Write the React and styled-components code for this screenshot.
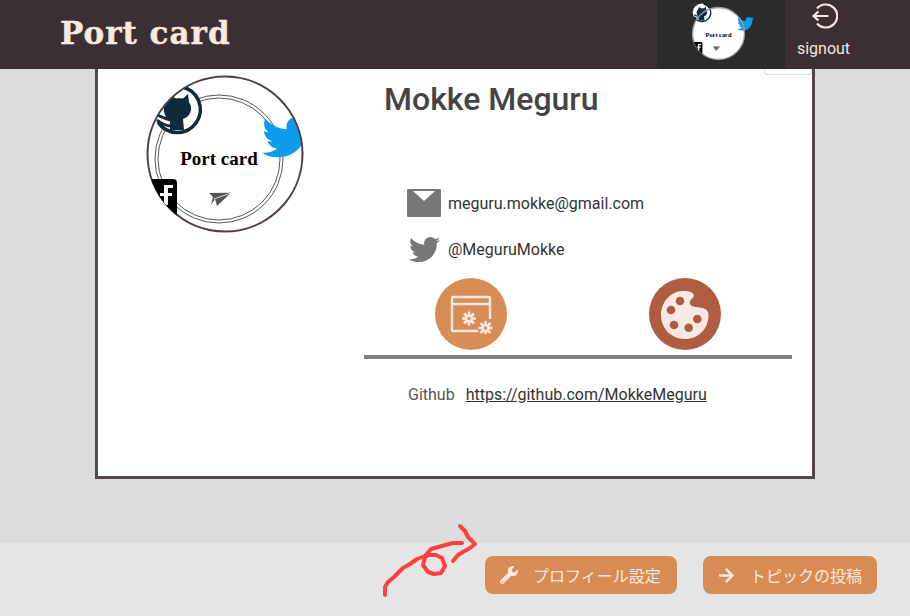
import React from 'react';
import styled, { createGlobalStyle } from 'styled-components';
import { FaTwitter, FaWrench, FaArrowRight } from 'react-icons/fa';

const GlobalStyle = createGlobalStyle`
  html, body { margin: 0; padding: 0; background: #dcdcdc; }
  body { font-family: Roboto, "Noto Sans CJK JP", sans-serif; }
`;

const Logo = ({ small }) => {
    const clipId = small ? 'clipS' : 'clipB';
    const clip = small ? undefined : `url(#${clipId})`;
    return (
        <LogoSvg viewBox="0 0 158 158" $size={small ? 53 : 158}>
            <defs>
                <clipPath id={clipId}>
                    <circle cx="79" cy="79" r="78" />
                </clipPath>
            </defs>
            <circle cx="79" cy="79" r="77.5" fill="#fff" />
            {!small && <circle cx="73" cy="84" r="64" fill="none" stroke="#555" strokeWidth="1" />}
            {!small && <circle cx="73" cy="84" r="61" fill="none" stroke="#555" strokeWidth="1" />}
            <text x={small ? 79 : 73} y="90" textAnchor="middle" fontFamily="'Liberation Serif', serif" fontWeight="700" fontSize="19">Port card</text>
            <g clipPath={clip}>
                <g transform={small ? 'translate(-9 -24) scale(1.15)' : 'translate(-2 -1)'}>
                    <circle cx="32.7" cy="35" r="23" fill="#fff" />
                    <path d="M38 13 A23 23 0 1 1 14 48" fill="none" stroke="#0f2a3a" strokeWidth="3.5" />
                    <path d="M20 38 C19 33 22 29 24 27 L26 21 L32 24.5 C34 24 37 24 39 24.5 L44 20 L45 28 C47 31 48 35 46 39 C45 42 42 44 39 45 L40 56 L26 56 L26 46 C23 45 21 42 20 38 Z" fill="#0f2a3a" />
                    <path d="M13 41 C18 43 22 45 27 46 M13 46 C18 50 22 52 27 52" fill="none" stroke="#0f2a3a" strokeWidth="2.8" />
                </g>
                <g transform={small ? 'translate(19 -12)' : undefined}>
                    <FaTwitter x="116" y="37" size={50} color="#0f9bec" />
                </g>
            </g>
            <circle cx="79" cy="79" r="77.5" fill="none" stroke={small ? '#999' : '#4e3f45'} strokeWidth={small ? 4 : 2} />
            <g clipPath={`url(#${clipId})`}>
                <path d="M5 104 H27 Q31 104 31 108 V142 L5 142 Z" fill="#000" />
                <path d="M18 110 H27 V113 H22 V118 H26 V121 H22 V130 H18 V121 H14 V118 H18 Z" fill="#fff" />
            </g>
            <path d="M63 118 L85 117.7 L71 131 L69 124 L65 130 L67 122 Z" fill="#555" />
            <path d="M85 118 L68 124" stroke="#fff" strokeWidth="0.8" />
        </LogoSvg>
    );
};

const SignoutIcon = () => (
    <svg width="28" height="28" viewBox="0 0 28 28" fill="none" stroke="#f5e6de" strokeWidth="2.2">
        <path d="M7 6.5 A11.5 11.5 0 1 1 7 21.5" />
        <path d="M18.5 14 H4 M8.5 9.5 L3.5 14 L8.5 18.5" />
    </svg>
);

const MailIcon = () => (
    <svg width="34" height="28" viewBox="0 0 34 28">
        <rect width="34" height="28" rx="1" fill="#777" />
        <path d="M6 2 H28 L17 12 Z" fill="#fff" />
    </svg>
);

const Gear = ({ x, y }) => (
    <g transform={`translate(${x} ${y})`} stroke="#f8e8df">
        <path d="M0 -7 V7 M-7 0 H7 M-5 -5 L5 5 M-5 5 L5 -5" strokeWidth="2.6" />
        <circle r="4" fill="#f8e8df" stroke="none" />
        <circle r="1.7" fill="#d98d56" stroke="none" />
    </g>
);

const WindowGearIcon = () => (
    <svg width="44" height="40" viewBox="0 0 44 40" fill="none" stroke="#f8e8df" strokeWidth="2.4">
        <path d="M29 37 H4 Q3 37 3 36 V4 Q3 3 4 3 H40 Q41 3 41 4 V25" />
        <path d="M3 10 H41" strokeWidth="2.6" />
        <Gear x={20} y={24.5} />
        <Gear x={36.5} y={34} />
    </svg>
);

const PaletteIcon = () => (
    <svg width="72" height="72" viewBox="0 0 72 72">
        <path d="M34 13 C38 13 42 13.5 44 15.5 C46 18 44 20 42 21.5 C39.5 24 41 27.5 44 28.5 C48 29.5 53 29 57 31.5 C60 34 60 38 59 42 C57 54 47 61 36 61 C22 61 12 50 12 37 C12 24 22 13 34 13 Z" fill="#f8e8df" />
        <g fill="#b05c40">
            <circle cx="31" cy="23" r="4.3" />
            <circle cx="22" cy="32" r="4.3" />
            <circle cx="48.3" cy="41" r="4.3" />
            <circle cx="39.7" cy="49.7" r="4.3" />
            <circle cx="25" cy="47" r="4.3" />
        </g>
    </svg>
);

const Scribble = () => (
    <ScribbleSvg width="110" height="85" viewBox="375 520 110 85" fill="none" stroke="#ff4040" strokeWidth="4" strokeLinecap="round" strokeLinejoin="round">
        <path d="M385 595 L385 587 L388 582 L394 577 L403 568 L410 564 L417 559 L425 556 L431 549 L442 546 L453 543 L462 543" />
        <path d="M425 557 L423 565 L428 572 L434 574 L441 573 L445 566 L442 558 L436 555 L428 555 Z" />
        <path d="M460 526 L465 531 L468 537 L475 544 L470 548 L463 552 L458 555 L453 561" />
    </ScribbleSvg>
);

const App = () => {
    return (
        <Page>
            <GlobalStyle />
            <Header>
                <Title>Port card</Title>
                <HeaderRight>
                    <LogoTab><Logo small /></LogoTab>
                    <Signout>
                        <SignoutIcon />
                        <SignoutLabel>signout</SignoutLabel>
                    </Signout>
                </HeaderRight>
            </Header>
            <Main>
                <Card>
                    <EditTab />
                    <LeftColumn><Logo /></LeftColumn>
                    <RightColumn>
                        <Name>Mokke Meguru</Name>
                        <ContactList>
                            <ContactRow>
                                <ContactIcon><MailIcon /></ContactIcon>
                                <ContactText>meguru.mokke@gmail.com</ContactText>
                            </ContactRow>
                            <ContactRow>
                                <ContactIcon><FaTwitter size={31} color="#777" /></ContactIcon>
                                <ContactText>@MeguruMokke</ContactText>
                            </ContactRow>
                        </ContactList>
                        <TopicTabs>
                            <TopicTab><TopicCircle $bg="#d98d56"><WindowGearIcon /></TopicCircle></TopicTab>
                            <TopicTab><TopicCircle $bg="#b05c40"><PaletteIcon /></TopicCircle></TopicTab>
                        </TopicTabs>
                        <Rule />
                        <LinkRow>
                            <LinkLabel>Github</LinkLabel>
                            <LinkUrl href="#">https://github.com/MokkeMeguru</LinkUrl>
                        </LinkRow>
                    </RightColumn>
                </Card>
            </Main>
            <Footer>
                <ActionButton $width={192}><FaWrench size={18} />プロフィール設定</ActionButton>
                <ActionButton $width={174}><FaArrowRight size={17} />トピックの投稿</ActionButton>
            </Footer>
            <Scribble />
        </Page>
    );
};

const Page = styled.div`
 position: relative;
 display: flex;
 flex-direction: column;
 width: 910px;
 height: 616px;
 overflow: hidden`;

const Header = styled.header`
 display: flex;
 align-items: center;
 justify-content: space-between;
 height: 69px;
 padding-left: 60px;
 background: #3c2f34`;

const Title = styled.h1`
 margin: 0 0 4px;
 font-family: "DejaVu Serif", serif;
 font-size: 31px;
 font-weight: 700;
 letter-spacing: 1px;
 color: #f8e8df;
 -webkit-text-stroke: 0.4px #f8e8df`;

const HeaderRight = styled.div`
 display: flex;
 height: 100%;
 margin-right: 48px`;

const LogoTab = styled.div`
 display: flex;
 justify-content: center;
 align-items: flex-start;
 width: 128px;
 padding: 7px 6px 0 0;
 box-sizing: border-box;
 background: #2b2b2b`;

const LogoSvg = styled.svg`
 display: block;
 width: ${p => p.$size}px;
 height: ${p => p.$size}px;
 overflow: visible`;

const Signout = styled.div`
 display: flex;
 flex-direction: column;
 align-items: center;
 width: 77px;
 padding-top: 2px`;

const SignoutLabel = styled.span`
 margin-top: 9px;
 font-size: 16px;
 color: #f5e6de`;

const Main = styled.main`
 display: flex;
 justify-content: center;
 align-items: flex-start;
 flex: 1`;

const Card = styled.section`
 position: relative;
 display: grid;
 grid-template-columns: 266px 428px;
 width: 720px;
 height: 410px;
 box-sizing: border-box;
 background: #fff;
 border: 3px solid #55454f;
 border-top: none`;

const EditTab = styled.div`
 position: absolute;
 top: 0;
 right: 0;
 width: 48px;
 height: 6px;
 box-sizing: border-box;
 border: 1px solid #ddd;
 border-top: none;
 border-radius: 0 0 4px 4px`;

const LeftColumn = styled.div`
 padding: 6px 0 0 48px`;

const RightColumn = styled.div`
 display: flex;
 flex-direction: column`;

const Name = styled.h2`
 margin: 12px 0 0 20px;
 font-size: 32px;
 line-height: 36px;
 font-weight: 500;
 color: #444`;

const ContactList = styled.div`
 display: flex;
 flex-direction: column;
 gap: 18px;
 margin: 72px 0 0 43px`;

const ContactRow = styled.div`
 display: flex;
 align-items: center;
 height: 28px`;

const ContactIcon = styled.div`
 display: flex;
 justify-content: center;
 width: 34px;
 margin-right: 7px`;

const ContactText = styled.span`
 font-size: 16px;
 color: #333`;

const TopicTabs = styled.div`
 display: grid;
 grid-template-columns: 1fr 1fr;
 margin-top: 15px`;

const TopicTab = styled.div`
 display: flex;
 justify-content: center`;

const TopicCircle = styled.div`
 display: flex;
 align-items: center;
 justify-content: center;
 width: 72px;
 height: 72px;
 border-radius: 50%;
 background: ${p => p.$bg}`;

const Rule = styled.div`
 height: 4px;
 margin-top: 5px;
 background: #808080`;

const LinkRow = styled.div`
 display: flex;
 gap: 11px;
 margin: 26px 0 0 44px;
 font-size: 16px;
 line-height: 19px`;

const LinkLabel = styled.span`
 color: #555`;

const LinkUrl = styled.a`
 color: #333`;

const Footer = styled.footer`
 display: flex;
 justify-content: flex-end;
 align-items: flex-start;
 gap: 26px;
 height: 73px;
 box-sizing: border-box;
 padding: 13px 33px 0 0;
 background: #e5e5e5`;

const ActionButton = styled.button`
 display: flex;
 align-items: center;
 gap: 15px;
 width: ${p => p.$width}px;
 height: 38px;
 padding: 0 0 0 15px;
 border: none;
 border-radius: 8px;
 background: #d88c55;
 color: #f8e8df;
 font-family: "Noto Sans CJK JP", sans-serif;
 font-size: 16px`;

const ScribbleSvg = styled.svg`
 position: absolute;
 left: 375px;
 top: 520px`;

export default App;
